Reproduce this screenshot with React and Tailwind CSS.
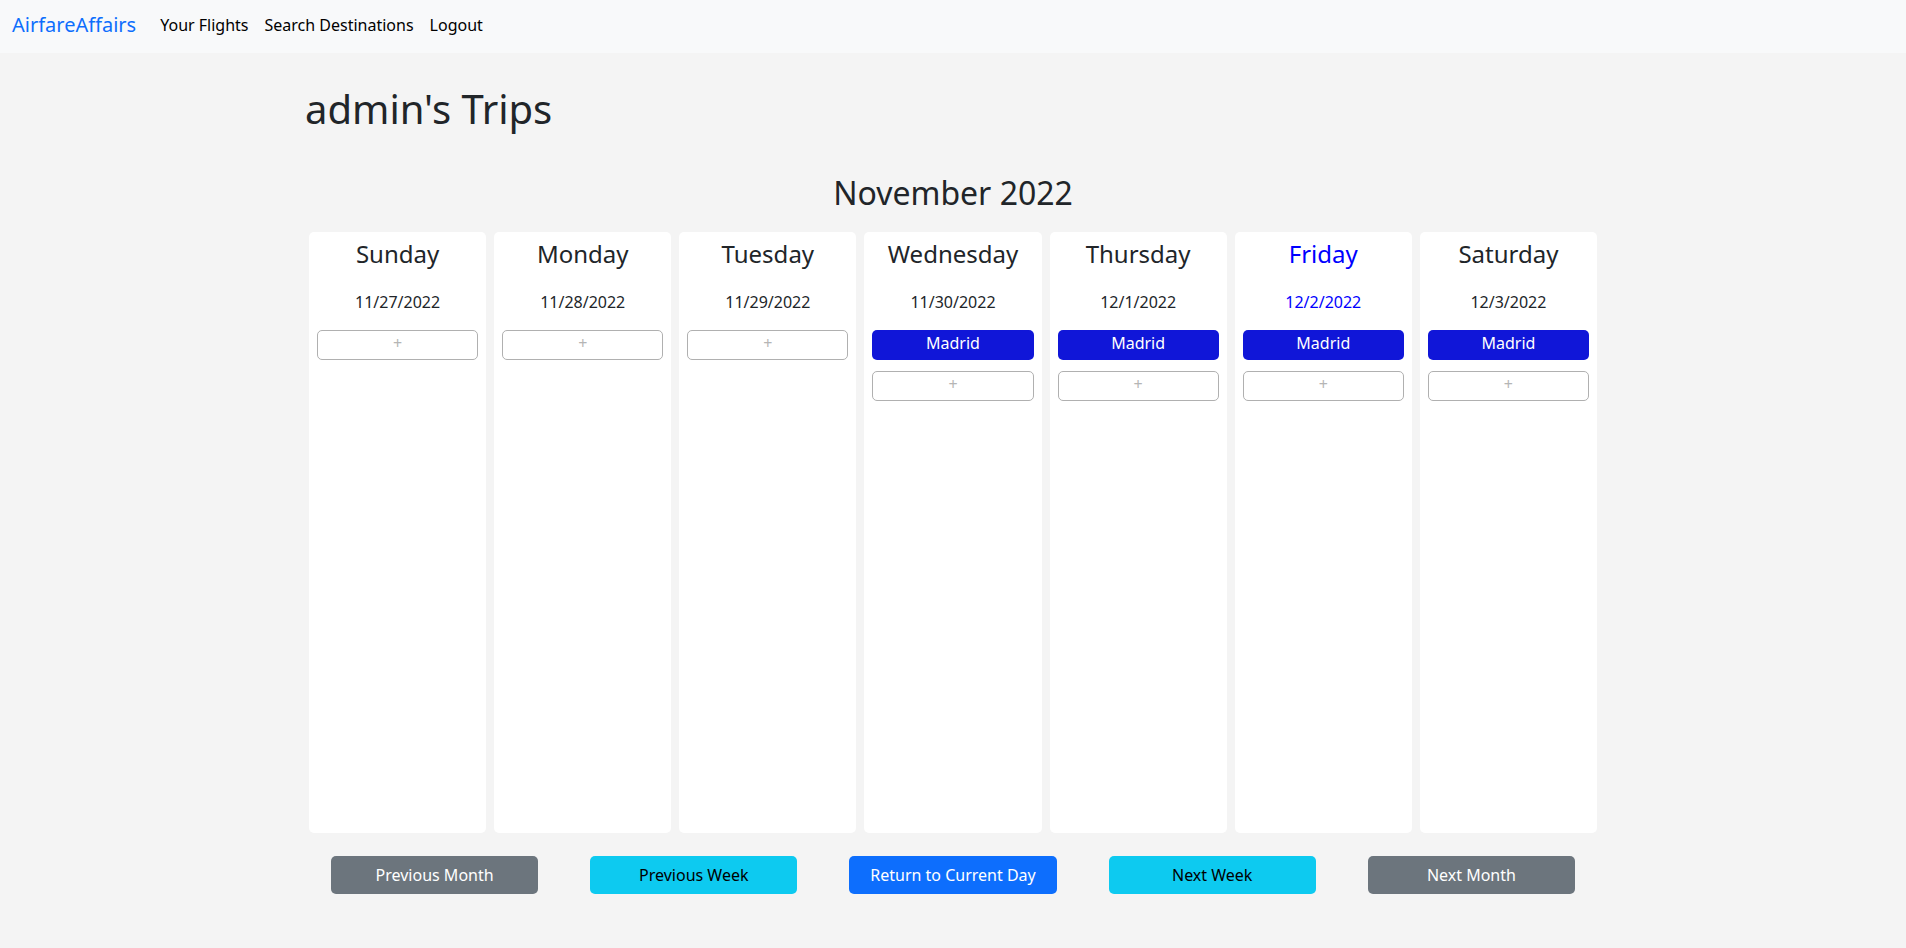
const days = [
  { name: 'Sunday', date: '11/27/2022', trips: [] },
  { name: 'Monday', date: '11/28/2022', trips: [] },
  { name: 'Tuesday', date: '11/29/2022', trips: [] },
  { name: 'Wednesday', date: '11/30/2022', trips: ['Madrid'] },
  { name: 'Thursday', date: '12/1/2022', trips: ['Madrid'] },
  { name: 'Friday', date: '12/2/2022', trips: ['Madrid'], today: true },
  { name: 'Saturday', date: '12/3/2022', trips: ['Madrid'] },
];

const navButtons = [
  { label: 'Previous Month', cls: 'bg-[#6c757d] text-white' },
  { label: 'Previous Week', cls: 'bg-[#0dcaf0] text-black' },
  { label: 'Return to Current Day', cls: 'bg-[#0d6efd] text-white' },
  { label: 'Next Week', cls: 'bg-[#0dcaf0] text-black' },
  { label: 'Next Month', cls: 'bg-[#6c757d] text-white' },
];

const DayColumn = ({ day }) => {
  const color = day.today ? 'text-[#0000ff]' : 'text-[#212529]';
  return (
    <div className="px-[4px]">
      <div className="bg-white rounded-[5px] h-[601px] px-2 pt-2 flex flex-col">
        <h4 className={`text-[24px] leading-[1.2] text-center ${color}`}>{day.name}</h4>
        <p className={`mt-[21px] text-[16px] leading-6 text-center ${color}`}>{day.date}</p>
        <div className="mt-4 flex flex-col gap-[11px]">
          {day.trips.map((trip, i) => (
            <button
              key={i}
              className="h-[30px] w-full rounded-[5px] bg-[#1016d8] text-white text-[16px] leading-6 pb-[5px]"
            >
              {trip}
            </button>
          ))}
          <button className="h-[30px] w-full rounded-[5px] border border-[#b0b0b0] bg-white text-[#b5b5b5] text-[16px] leading-6 pb-[5px]">
            +
          </button>
        </div>
      </div>
    </div>
  );
};

export default function App() {
  return (
    <div
      className="min-h-screen bg-[#f4f4f4] text-[#212529]"
      style={{ fontFamily: '"Noto Sans", "Open Sans", sans-serif' }}
    >
      {/* navbar */}
      <nav className="h-[53px] bg-[#f8f9fa] flex items-start pt-[13px] pl-3">
        <a className="text-[20px] leading-6 text-[#0d6efd] mr-4">AirfareAffairs</a>
        <div className="flex">
          <a className="px-2 text-[16px] leading-6 text-black">Your Flights</a>
          <a className="px-2 text-[16px] leading-6 text-black">Search Destinations</a>
          <a className="px-2 text-[16px] leading-6 text-black">Logout</a>
        </div>
      </nav>

      <div className="max-w-[1320px] mx-auto px-3 pt-[32px] pb-10">
        <h1 className="text-[40px] leading-[1.2]">admin's Trips</h1>
        <h2 className="mt-[41px] text-[32px] leading-[1.2] text-center">November 2022</h2>

        <div className="mt-[20px] grid grid-cols-7">
          {days.map((d) => (
            <DayColumn key={d.name} day={d} />
          ))}
        </div>

        <div className="mt-[23px] grid grid-cols-5">
          {navButtons.map((b) => (
            <div key={b.label} className="flex justify-center">
              <button className={`w-4/5 h-[38px] rounded-[5px] text-[16px] leading-6 ${b.cls}`}>
                {b.label}
              </button>
            </div>
          ))}
        </div>
      </div>
    </div>
  );
}
